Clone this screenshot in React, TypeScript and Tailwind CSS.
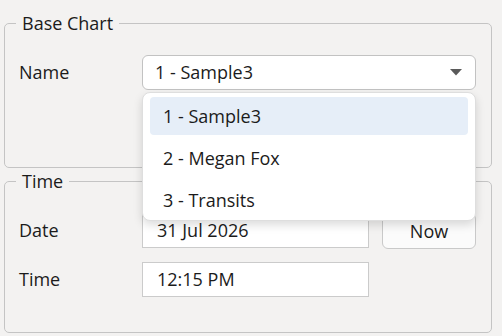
import React from "react";

const items = ["1 - Sample3", "2 - Megan Fox", "3 - Transits"];

export default function App() {
  return (
    <div className="relative w-[502px] h-[336px] overflow-hidden bg-[#f3f2f1] px-[4px] pt-[11px] font-['Open_Sans',sans-serif] text-[18px] text-[#1b1b1b]">
      <fieldset className="h-[157px] w-[488px] rounded-[5px] border border-[#c4c4c4] px-[14px]">
        <legend className="ml-[-3px] px-[6px] leading-[25px]">Base Chart</legend>
        <div className="mt-[19px] flex items-center">
          <span className="w-[123px]">Name</span>
          <div className="flex h-[35px] w-[334px] items-center justify-between rounded-[6px] border border-[#c2c2c2] bg-white pl-[12px] pr-[13px]">
            <span>1 - Sample3</span>
            <svg width="12" height="7" viewBox="0 0 12 7">
              <path d="M0 0 L12 0 L6 6.5 Z" fill="#5a5a5a" />
            </svg>
          </div>
        </div>
      </fieldset>

      <fieldset className="mt-[1px] h-[164px] w-[488px] rounded-[5px] border border-[#c4c4c4] px-[14px]">
        <legend className="ml-[-3px] px-[6px] leading-[25px]">Time</legend>
        <div className="mt-[19px] flex items-start">
          <span className="flex h-[35px] w-[123px] items-center">Date</span>
          <div className="flex h-[35px] w-[227px] items-center border border-[#cbcbcb] bg-white pl-[14px]">
            31 Jul 2026
          </div>
          <button className="ml-[13px] flex h-[36px] w-[94px] items-center justify-center rounded-[6px] border border-[#c9c9c9] bg-[#fbfbfb]">
            Now
          </button>
        </div>
        <div className="mt-[13px] flex items-center">
          <span className="w-[123px]">Time</span>
          <div className="flex h-[35px] w-[227px] items-center border border-[#cbcbcb] bg-white pl-[14px]">
            12:15 PM
          </div>
        </div>
      </fieldset>

      <div className="absolute left-[142px] top-[92px] flex h-[129px] w-[334px] flex-col gap-[4px] rounded-[8px] border border-[#dedede] bg-white px-[7px] pt-[4px] shadow-[0_4px_10px_rgba(0,0,0,0.14)]">
        {items.map((it, i) => (
          <div
            key={it}
            className={
              "flex h-[38px] items-center rounded-[4px] pl-[13px] " +
              (i === 0 ? "bg-[#e6eef8]" : "")
            }
          >
            {it}
          </div>
        ))}
      </div>
    </div>
  );
}
